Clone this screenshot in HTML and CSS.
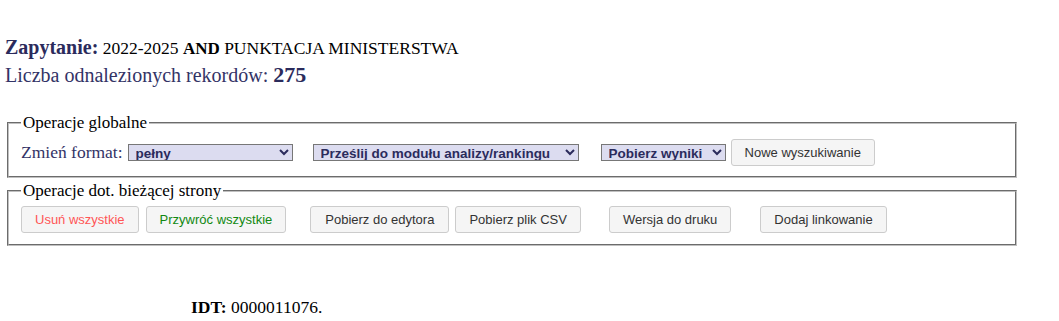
FILE: index.html
```html
<!DOCTYPE html>
<html lang="pl">
<head>
  <meta charset="UTF-8" />
  <title>Wyniki wyszukiwania</title>
  <link rel="stylesheet" href="styles.css">
</head>
<body>
  <div class="query-info">
    <p class="query"><strong>Zapytanie:</strong> 2022-2025 <b class="op">AND</b> PUNKTACJA MINISTERSTWA</p>
    <p class="count">Liczba odnalezionych rekordów: <strong>275</strong></p>
  </div>

  <form class="ops">
    <fieldset>
      <legend>Operacje globalne</legend>
      <div class="row">
        <label for="format-select" class="label">Zmień format:</label>
        <select id="format-select" class="sel sel-format">
          <option>pełny</option>
        </select>
        <select class="sel sel-send">
          <option>Prześlij do modułu analizy/rankingu</option>
        </select>
        <select class="sel sel-download">
          <option>Pobierz wyniki</option>
        </select>
        <button type="button" class="btn btn-new">Nowe wyszukiwanie</button>
      </div>
    </fieldset>

    <fieldset class="page-ops">
      <legend>Operacje dot. bieżącej strony</legend>
      <div class="row">
        <button type="button" class="btn btn-red">Usuń wszystkie</button>
        <button type="button" class="btn btn-green">Przywróć wszystkie</button>
        <button type="button" class="btn btn-edit">Pobierz do edytora</button>
        <button type="button" class="btn btn-csv">Pobierz plik CSV</button>
        <button type="button" class="btn btn-print">Wersja do druku</button>
        <button type="button" class="btn btn-link">Dodaj linkowanie</button>
      </div>
    </fieldset>
  </form>

  <p class="record"><strong>IDT:</strong> 0000011076.</p>
</body>
</html>
```

FILE: styles.css
```css
body {
  margin: 5px;
  padding-top: 30px;
  font-family: "Liberation Serif", serif;
  font-size: 20px;
  color: #000;
}
p {
  margin: 0;
}
.query {
  font-size: 17.5px;
  line-height: 25px;
}
.query strong {
  font-size: 20px;
  color: #2b2b5c;
}
.query .op {
  font-size: 17px;
}
.count {
  color: #333366;
  line-height: 27px;
}
.count strong {
  font-size: 22px;
  color: #2b2b5c;
}
.ops {
  margin-top: 24px;
  width: 1014px;
}
fieldset {
  margin: 0 2px;
  padding: 6px 12px 10px;
  border: 2px groove rgb(192, 192, 192);
}
.page-ops {
  margin-top: 3px;
  padding-top: 5px;
  padding-bottom: 11px;
}
legend {
  padding: 0 2px;
  font-size: 17px;
}
.row {
  display: flex;
  align-items: center;
}
.label {
  color: #333366;
  font-size: 17.5px;
  margin-right: 5px;
}
.sel {
  font-family: "Liberation Sans", Arial, sans-serif;
  font-size: 13.5px;
  font-weight: bold;
  color: #2b2b5c;
  background: #dcdcf0;
  border: 1px solid #777;
  height: 17px;
  padding: 0 0 0 3px;
}
.sel-format {
  width: 165px;
}
.sel-send {
  width: 266px;
  margin-left: 20px;
}
.sel-download {
  width: 125px;
  margin-left: 22px;
}
.btn {
  font-family: "Liberation Sans", Arial, sans-serif;
  font-size: 13px;
  color: #333;
  background: #f5f5f5;
  border: 1px solid #ccc;
  border-radius: 3px;
  height: 27px;
  padding: 0 13px;
}
.btn-new {
  margin-left: 5px;
}
.btn-red {
  color: #ff5555;
}
.btn-green {
  color: #118811;
  margin-left: 7px;
}
.btn-edit {
  margin-left: 24px;
  padding: 0 14px;
}
.btn-csv {
  margin-left: 6px;
}
.btn-print {
  margin-left: 28px;
}
.btn-link {
  margin-left: 29px;
}
.record {
  margin: 51px 0 0 186px;
  font-size: 17.5px;
}
```
